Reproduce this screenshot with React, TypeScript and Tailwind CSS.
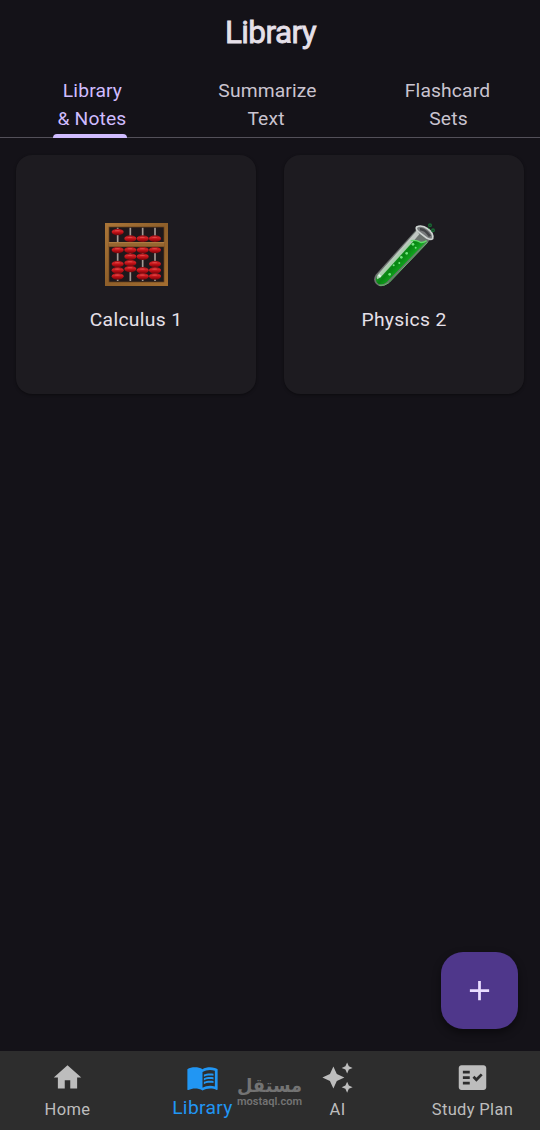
import { MdAdd, MdAutoAwesome, MdFactCheck, MdHome, MdMenuBook } from "react-icons/md"

const tabs = [
  { id: 1, lines: ["Library", "& Notes"], active: true, offsets: ["pl-[5px]", "pl-[4px]"] },
  { id: 2, lines: ["Summarize", "Text"], active: false, offsets: ["pr-[5px]", "pr-[8px]"] },
  { id: 3, lines: ["Flashcard", "Sets"], active: false, offsets: ["pr-[5px]", "pr-[3px]"] }
]

const navItems = [
  { id: 1, label: "Home", icon: MdHome, active: false },
  { id: 2, label: "Library", icon: MdMenuBook, active: true },
  { id: 3, label: "AI", icon: MdAutoAwesome, active: false },
  { id: 4, label: "Study Plan", icon: MdFactCheck, active: false }
]

// rod x position and the bead heights on it
const rods = [
  { x: 68, beads: [57, 111, 153, 172, 190] },
  { x: 106, beads: [77, 111, 131, 150, 168] },
  { x: 143, beads: [77, 111, 131, 172, 190] },
  { x: 180, beads: [77, 111, 153, 172, 190] }
]

const Abacus = () => (
  <svg viewBox="30 30 189 189" className="h-[63px] w-[63px]">
    <defs>
      <linearGradient id="wood" x1="0" y1="0" x2="1" y2="1">
        <stop offset="0" stopColor="#a87437" />
        <stop offset="0.5" stopColor="#8e5f2a" />
        <stop offset="1" stopColor="#a26d30" />
      </linearGradient>
      <linearGradient id="bead" x1="0" y1="0" x2="0" y2="1">
        <stop offset="0" stopColor="#8f0d12" />
        <stop offset="0.35" stopColor="#d42428" />
        <stop offset="0.6" stopColor="#b90e14" />
        <stop offset="1" stopColor="#6d050a" />
      </linearGradient>
    </defs>
    <rect x="38" y="38" width="173" height="173" fill="#1e181b" />
    {rods.map((rod) => (
      <g key={rod.x}>
        <rect x={rod.x - 2.5} y="44" width="5" height="160" fill="#a39994" />
        {rod.beads.map((y) => (
          <g key={y}>
            <ellipse cx={rod.x} cy={y} rx="18" ry="10" fill="url(#bead)" />
            <ellipse cx={rod.x - 1} cy={y - 4} rx="8" ry="2" fill="#ec5a58" opacity="0.6" />
          </g>
        ))}
      </g>
    ))}
    <rect x="36" y="36" width="177" height="177" fill="none" stroke="url(#wood)" strokeWidth="12" />
    <rect x="42" y="42" width="165" height="165" fill="none" stroke="#6b431b" strokeWidth="2" />
    <rect x="41" y="87" width="167" height="15" fill="#966530" />
    <path d="M41 89h167" stroke="#b08146" strokeWidth="3" />
    <path d="M41 101h167" stroke="#6b431b" strokeWidth="2" />
  </svg>
)

const TestTube = () => (
  <svg viewBox="32 27 189 192" className="h-[64px] w-[63px]">
    <defs>
      <linearGradient id="liquid" x1="90" y1="125" x2="135" y2="165" gradientUnits="userSpaceOnUse">
        <stop offset="0" stopColor="#2aa536" />
        <stop offset="0.4" stopColor="#078512" />
        <stop offset="0.7" stopColor="#0fa01c" />
        <stop offset="1" stopColor="#3cc445" />
      </linearGradient>
    </defs>
    <path d="M163 46L40 182Q33 193 37 204Q45 219 61 216Q70 214 79 206L205 76Z" fill="#8f9992" opacity="0.7" />
    <path d="M144 80L46 184Q36 196 44 206Q55 218 73 205L192 83Q177 88 166 82Q154 77 144 80Z" fill="url(#liquid)" />
    <path d="M163 50L48 180Q41 188 45 196L55 190L151 84L171 61Z" fill="#dce2dd" opacity="0.75" />
    <path d="M145 80Q163 77 174 85Q182 87 193 80" fill="none" stroke="#62d868" strokeWidth="4" />
    <path d="M196 85L80 206Q66 217 51 214" fill="none" stroke="#62bd68" strokeWidth="3" />
    <path d="M163 39Q178 31 197 45Q215 59 211 74Q205 79 193 72L168 53Q159 45 163 39Z" fill="#777a7b" stroke="#ced4d1" strokeWidth="5" />
    <path d="M173 46Q187 44 203 67" fill="none" stroke="#434547" strokeWidth="8" />
    <g fill="#72e67e">
      <circle cx="152" cy="91" r="4" />
      <circle cx="160" cy="101" r="3" />
      <circle cx="133" cy="118" r="4" />
      <circle cx="117" cy="130" r="4" />
      <circle cx="111" cy="147" r="3" />
      <circle cx="94" cy="154" r="3" />
      <circle cx="82" cy="181" r="4" />
    </g>
    <path d="M49 183L55 188" stroke="#e5fff0" strokeWidth="5" />
    <g fill="none" stroke="#176c32" strokeWidth="4">
      <circle cx="203" cy="34" r="4" />
      <circle cx="212" cy="49" r="4" />
    </g>
    <circle cx="199" cy="43" r="2" fill="#30ae48" />
  </svg>
)

const subjects = [
  { id: 1, name: "Calculus 1", icon: Abacus },
  { id: 2, name: "Physics 2", icon: TestTube }
]

const Watermark = () => (
  <div className="absolute left-[232px] top-[18px] h-[44px] w-[75px] text-[#737373]">
    <svg viewBox="0 0 75 44" className="h-full w-full overflow-visible" fill="currentColor">
      <text x="37.5" y="23" textAnchor="middle" direction="rtl" textLength="65" lengthAdjust="spacingAndGlyphs" fontFamily="DejaVu Sans, sans-serif" fontWeight="700" fontSize="19">مستقل</text>
      <text x="37.5" y="36" textAnchor="middle" textLength="65" lengthAdjust="spacingAndGlyphs" fontFamily="Roboto, sans-serif" fontWeight="600" fontSize="11">mostaql.com</text>
    </svg>
  </div>
)

const App = () => {
  return (
    <div className="flex h-[1130px] w-[540px] flex-col overflow-hidden bg-[#141218] font-[Roboto,sans-serif]">
      <header className="flex h-[66px] justify-center pt-[12px] pl-px">
        <h1 className="text-[31.5px] font-normal leading-[42px] tracking-[-0.6px] text-[#e6e0e9] [-webkit-text-stroke:0.8px_#e6e0e9]">Library</h1>
      </header>

      <div className="grid h-[72px] grid-cols-3 border-b border-[#535059]">
        {tabs.map((tab) => (
          <div key={tab.id} className="relative flex flex-col items-center pt-[11px]">
            {tab.lines.map((line, i) => (
              <span
                key={line}
                className={`${tab.offsets[i]} h-[27.5px] whitespace-nowrap text-[19.25px] leading-[27.5px] tracking-[0.14px] ${tab.active ? "text-[#d0bcff]" : "text-[#cac4d0]"}`}
              >
                {line}
              </span>
            ))}
            {tab.active && <div className="absolute -bottom-px h-[4px] w-[74px] rounded-t-[4px] bg-[#d0bcff]"></div>}
          </div>
        ))}
      </div>

      <main className="flex flex-1 flex-col justify-between">
        <div className="grid grid-cols-2 gap-[28px] px-[16px] pt-[17px]">
          {subjects.map((subject) => (
            <div key={subject.id} className="flex h-[239px] flex-col items-center rounded-[16px] bg-[#1d1b20] pt-[68px] shadow-[0_1px_3px_rgba(0,0,0,0.4)]">
              <subject.icon />
              <span className="mt-auto mb-[60px] text-[19.25px] leading-[28px] tracking-[0.34px] text-[#e6e0e9]">{subject.name}</span>
            </div>
          ))}
        </div>
        <button className="mr-[22px] mb-[22px] flex h-[77px] w-[77px] items-center justify-center self-end rounded-[22px] bg-[#4f378b] text-[#eaddff] shadow-[0_4px_8px_rgba(0,0,0,0.45)]">
          <MdAdd size={33} />
        </button>
      </main>

      <nav className="relative grid h-[79px] grid-cols-4 bg-[#2d2d2d]">
        {navItems.map((item) => (
          <div key={item.id} className={`flex flex-col items-center pt-[10px] ${item.active ? "text-[#2196f3]" : "text-[#bdbdbd]"}`}>
            <item.icon size={33} />
            <span className={`whitespace-nowrap leading-[24px] ${item.active ? "mt-[2px] text-[19.25px] tracking-[0.34px]" : "mt-[4px] text-[16.5px] tracking-[0.35px]"}`}>
              {item.label}
            </span>
          </div>
        ))}
        <Watermark />
      </nav>
    </div>
  )
}

export default App
